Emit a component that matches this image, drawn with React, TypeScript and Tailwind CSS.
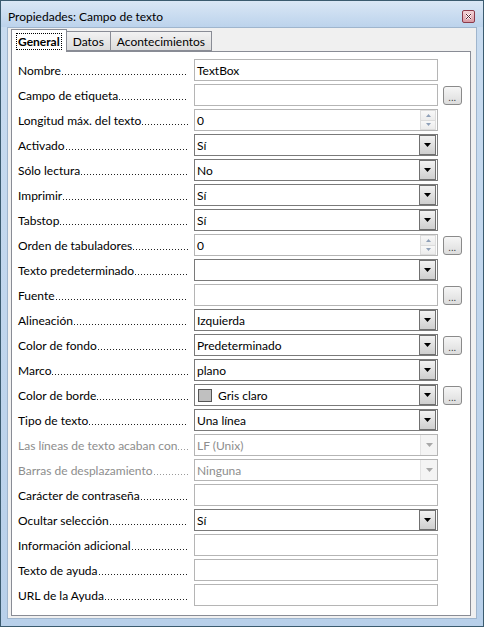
import React from "react";

type Row = {
  label: string;
  kind: "text" | "combo" | "spin";
  value?: string;
  btn?: boolean;
  disabled?: boolean;
  swatch?: boolean;
};

const rows: Row[] = [
  { label: "Nombre", kind: "text", value: "TextBox" },
  { label: "Campo de etiqueta", kind: "text", btn: true },
  { label: "Longitud máx. del texto", kind: "spin", value: "0" },
  { label: "Activado", kind: "combo", value: "Sí" },
  { label: "Sólo lectura", kind: "combo", value: "No" },
  { label: "Imprimir", kind: "combo", value: "Sí" },
  { label: "Tabstop", kind: "combo", value: "Sí" },
  { label: "Orden de tabuladores", kind: "spin", value: "0", btn: true },
  { label: "Texto predeterminado", kind: "combo", value: "" },
  { label: "Fuente", kind: "text", btn: true },
  { label: "Alineación", kind: "combo", value: "Izquierda" },
  { label: "Color de fondo", kind: "combo", value: "Predeterminado", btn: true },
  { label: "Marco", kind: "combo", value: "plano" },
  { label: "Color de borde", kind: "combo", value: "Gris claro", btn: true, swatch: true },
  { label: "Tipo de texto", kind: "combo", value: "Una línea" },
  { label: "Las líneas de texto acaban con", kind: "combo", value: "LF (Unix)", disabled: true },
  { label: "Barras de desplazamiento", kind: "combo", value: "Ninguna", disabled: true },
  { label: "Carácter de contraseña", kind: "text" },
  { label: "Ocultar selección", kind: "combo", value: "Sí" },
  { label: "Información adicional", kind: "text" },
  { label: "Texto de ayuda", kind: "text" },
  { label: "URL de la Ayuda", kind: "text" },
];

function DropBtn({ disabled }: { disabled?: boolean }) {
  if (disabled) {
    return (
      <div className="w-[17px] h-full flex items-center justify-center border-l border-[#e3e3e3] bg-[#f4f4f4]">
        <svg width="7" height="4" viewBox="0 0 7 4">
          <path d="M0 0h7L3.5 4z" fill="#a8a8a8" />
        </svg>
      </div>
    );
  }
  return (
    <div className="w-[17px] h-[20px] my-auto mr-px flex items-center justify-center border border-[#707070] bg-gradient-to-b from-[#f2f2f2] to-[#cfcfcf]">
      <svg width="7" height="4" viewBox="0 0 7 4">
        <path d="M0 0h7L3.5 4z" fill="#000" />
      </svg>
    </div>
  );
}

function SpinBtn() {
  return (
    <div className="w-[16px] h-[20px] my-auto mr-px flex flex-col">
      <div className="flex-1 flex items-center justify-center border border-[#dcdcdc] bg-gradient-to-b from-[#f8f8f8] to-[#ececec]">
        <svg width="5" height="3" viewBox="0 0 5 3">
          <path d="M0 3h5L2.5 0z" fill="#8fa0b8" />
        </svg>
      </div>
      <div className="flex-1 flex items-center justify-center border border-t-0 border-[#dcdcdc] bg-gradient-to-b from-[#f8f8f8] to-[#ececec]">
        <svg width="5" height="3" viewBox="0 0 5 3">
          <path d="M0 0h5L2.5 3z" fill="#8fa0b8" />
        </svg>
      </div>
    </div>
  );
}

function DotsBtn() {
  return (
    <div className="w-[19px] h-[19px] ml-[5px] rounded-[3px] border border-[#8a8a8a] bg-gradient-to-b from-[#f6f6f6] to-[#dcdcdc] flex items-end justify-center pb-[3px]">
      <span className="text-[9px] leading-[6px] text-[#333] tracking-[0.5px]">...</span>
    </div>
  );
}

function FieldRow({ r }: { r: Row }) {
  const labelColor = r.disabled ? "text-[#8d8d8d]" : "text-black";
  const dotColor = r.disabled
    ? "bg-[linear-gradient(to_right,#9a9a9a_1px,transparent_1px)]"
    : "bg-[linear-gradient(to_right,#222_1px,transparent_1px)]";
  const valColor = r.disabled ? "text-[#8d8d8d]" : "text-black";
  const borderColor =
    r.kind === "combo" && !r.disabled ? "border-[#7a7a7a]" : "border-[#b5b5b5]";
  return (
    <div className="flex items-center h-[22px]">
      <div className={`w-[170px] mr-[6px] h-[15px] flex whitespace-nowrap ${labelColor}`}>
        <span>{r.label}</span>
        <span className={`flex-1 self-end h-px mb-[3px] ml-[1px] ${dotColor} bg-[length:3px_1px] bg-repeat-x`} />
      </div>
      <div className={`w-[244px] h-[22px] flex bg-white border ${borderColor}`}>
        <div className={`flex-1 flex items-center pl-[2px] ${valColor} whitespace-nowrap`}>
          {r.swatch && (
            <span className="inline-block w-[14px] h-[13px] bg-[#c0c0c0] border border-[#555] mr-[6px] ml-[1px]" />
          )}
          {r.value}
        </div>
        {r.kind === "combo" && <DropBtn disabled={r.disabled} />}
        {r.kind === "spin" && <SpinBtn />}
      </div>
      {r.btn && <DotsBtn />}
    </div>
  );
}

export default function App() {
  return (
    <div
      className="w-[484px] h-[627px] border border-[#3b5b6f] bg-gradient-to-b from-[#c9dcf0] to-[#b8d0ea] flex flex-col text-[12px] leading-[15px]"
      style={{ fontFamily: 'Lato, "Open Sans", "Liberation Sans", sans-serif' }}
    >
      <div className="h-[26px] flex items-center justify-between pl-[7px] pr-[8px] bg-gradient-to-b from-[#dae7f5] to-[#bcd3ec]">
        <span className="text-black text-[12px] pt-[4px]">Propiedades: Campo de texto</span>
        <div className="w-[13px] h-[13px] mt-[4px] rounded-[2px] border border-[#8b3a4a] bg-gradient-to-b from-[#f3d4d8] to-[#d99aa4] flex items-center justify-center">
          <svg width="7" height="7" viewBox="0 0 7 7">
            <path d="M1 1L6 6M6 1L1 6" stroke="#fff" strokeWidth="2" />
            <path d="M1 1L6 6M6 1L1 6" stroke="#5a2030" strokeWidth="1" />
          </svg>
        </div>
      </div>
      <div className="flex-1 mx-[6px] mb-[7px] bg-[#f0f0f0] border border-[#9fb5cd] pl-[3px] pr-[5px] pb-[2px] flex flex-col">
        <div className="flex items-end h-[23px]">
          <div className="relative z-10 h-[23px] px-[5px] pt-[4px] bg-white border border-b-0 border-[#898c95] -mb-px">
            <span className="px-[1px] font-bold outline outline-1 outline-dotted outline-black">General</span>
          </div>
          <div className="h-[20px] px-[6px] pt-[2px] border border-l-0 border-[#898c95] bg-gradient-to-b from-[#f2f2f2] to-[#dcdcdc]">
            Datos
          </div>
          <div className="h-[20px] px-[6px] pt-[2px] border border-l-0 border-[#898c95] bg-gradient-to-b from-[#f2f2f2] to-[#dcdcdc]">
            Acontecimientos
          </div>
        </div>
        <div className="flex-1 bg-white border border-[#898c95] pl-[6px] pt-[7px] flex flex-col gap-[3px]">
          {rows.map((r) => (
            <FieldRow key={r.label} r={r} />
          ))}
        </div>
      </div>
    </div>
  );
}
